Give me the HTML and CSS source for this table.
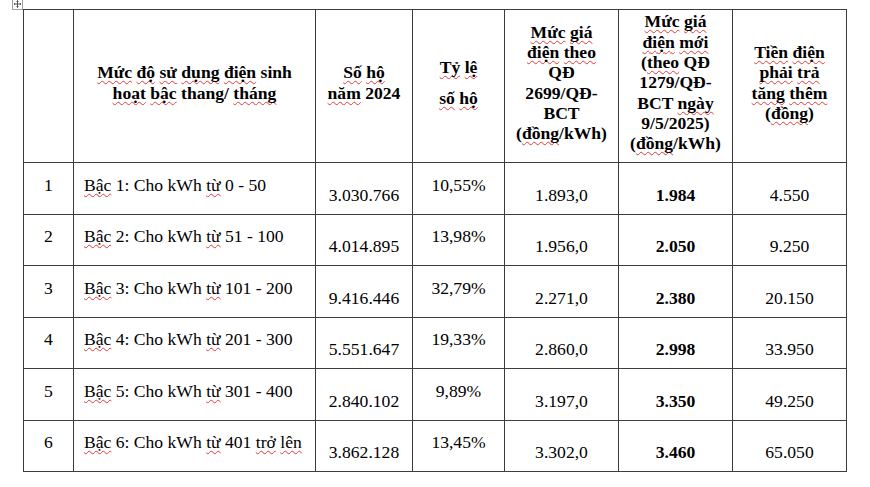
FILE: index.html
```html
<!DOCTYPE html>
<html lang="vi">
<head>
<meta charset="utf-8">
<link rel="stylesheet" href="styles.css">
</head>
<body>
<div class="page">
  <svg class="move-handle" width="11" height="10" viewBox="0 0 11 10">
    <rect x="0.5" y="-1.5" width="10" height="11" fill="#fff" stroke="#a0a0a0"/>
    <path d="M5.5 0.5v7M2 4h7M4.5 1.5l1-1 1 1M4.5 6.5l1 1 1-1M3 3l-1 1 1 1M8 3l1 1-1 1" stroke="#555" stroke-width="1" fill="none"/>
  </svg>
  <table class="tbl">
    <colgroup>
      <col class="c1"><col class="c2"><col class="c3"><col class="c4"><col class="c5"><col class="c6"><col class="c7">
    </colgroup>
    <thead>
      <tr class="head">
        <th></th>
        <th><span class="sp">Mức</span> <span class="sp">độ</span> <span class="sp">sử</span> <span class="sp">dụng</span> <span class="sp">điện</span> sinh<br><span class="sp">hoạt</span> <span class="sp">bậc</span> thang/ <span class="sp">tháng</span></th>
        <th><span class="sp">Số</span> <span class="sp">hộ</span><br><span class="sp">năm</span> 2024</th>
        <th class="wide-lines"><span class="sp">Tỷ</span> <span class="sp">lệ</span><br><span class="sp">số</span> <span class="sp">hộ</span></th>
        <th><span class="sp">Mức</span> <span class="sp">giá</span><br><span class="sp">điện</span> <span class="sp">theo</span><br>QĐ<br>2699/QĐ-<br>BCT<br>(<span class="sp">đồng</span>/kWh)</th>
        <th><span class="sp">Mức</span> <span class="sp">giá</span><br><span class="sp">điện</span> <span class="sp">mới</span><br>(<span class="sp">theo</span> QĐ<br>1279/QĐ-<br>BCT <span class="sp">ngày</span><br>9/5/2025)<br>(<span class="sp">đồng</span>/kWh)</th>
        <th><span class="sp">Tiền</span> <span class="sp">điện</span><br><span class="sp">phải</span> <span class="sp">trả</span><br><span class="sp">tăng</span> <span class="sp">thêm</span><br>(<span class="sp">đồng</span>)</th>
      </tr>
    </thead>
    <tbody>
      <tr>
        <td class="num">1</td><td class="label"><span class="sp">Bậc</span> 1: Cho kWh <span class="sp">từ</span> 0 - 50</td>
        <td class="low">3.030.766</td><td>10,55%</td><td class="low">1.893,0</td><td class="low strong">1.984</td><td class="low">4.550</td>
      </tr>
      <tr>
        <td class="num">2</td><td class="label"><span class="sp">Bậc</span> 2: Cho kWh <span class="sp">từ</span> 51 - 100</td>
        <td class="low">4.014.895</td><td>13,98%</td><td class="low">1.956,0</td><td class="low strong">2.050</td><td class="low">9.250</td>
      </tr>
      <tr>
        <td class="num">3</td><td class="label"><span class="sp">Bậc</span> 3: Cho kWh <span class="sp">từ</span> 101 - 200</td>
        <td class="low">9.416.446</td><td>32,79%</td><td class="low">2.271,0</td><td class="low strong">2.380</td><td class="low">20.150</td>
      </tr>
      <tr>
        <td class="num">4</td><td class="label"><span class="sp">Bậc</span> 4: Cho kWh <span class="sp">từ</span> 201 - 300</td>
        <td class="low">5.551.647</td><td>19,33%</td><td class="low">2.860,0</td><td class="low strong">2.998</td><td class="low">33.950</td>
      </tr>
      <tr>
        <td class="num">5</td><td class="label"><span class="sp">Bậc</span> 5: Cho kWh <span class="sp">từ</span> 301 - 400</td>
        <td class="low">2.840.102</td><td>9,89%</td><td class="low">3.197,0</td><td class="low strong">3.350</td><td class="low">49.250</td>
      </tr>
      <tr>
        <td class="num">6</td><td class="label"><span class="sp">Bậc</span> 6: Cho kWh <span class="sp">từ</span> 401 <span class="sp">trở</span> <span class="sp">lên</span></td>
        <td class="low">3.862.128</td><td>13,45%</td><td class="low">3.302,0</td><td class="low strong">3.460</td><td class="low">65.050</td>
      </tr>
    </tbody>
  </table>
  <div class="resize-handle"></div>
</div>
</body>
</html>
```
FILE: styles.css
```css
html, body {
  margin: 0;
  padding: 0;
  background: #ffffff;
}
.page {
  position: relative;
  padding: 9px 0 0 23px;
  font-family: "Liberation Serif", "Times New Roman", serif;
  font-size: 17.6px;
  line-height: 20.3px;
  color: #000;
}
.move-handle {
  position: absolute;
  left: 12px;
  top: 0;
}
.resize-handle {
  position: absolute;
  left: 847px;
  top: 472px;
  width: 3px;
  height: 3px;
  border: 1px solid #a0a0a0;
  background: #fff;
}
.tbl {
  border-collapse: collapse;
  table-layout: fixed;
  width: 823px;
}
.c1 { width: 50px; }
.c2 { width: 242px; }
.c3 { width: 97px; }
.c4 { width: 92px; }
.c5 { width: 114px; }
.c6 { width: 114px; }
.c7 { width: 114px; }
.tbl th, .tbl td {
  border: 1px solid #3c3c3c;
  padding: 0;
  text-align: center;
}
.head th {
  height: 153px;
  box-sizing: border-box;
  vertical-align: middle;
  padding-bottom: 7px;
  font-weight: bold;
}
.head th.wide-lines {
  line-height: 31px;
}
.tbl td {
  height: 51.5px;
  box-sizing: border-box;
  vertical-align: top;
  padding-top: 11.5px;
  white-space: nowrap;
}
.tbl td.label {
  text-align: left;
  padding-left: 10px;
}
.tbl td.low {
  padding-top: 21.5px;
}
.tbl td.strong {
  font-weight: bold;
}
.sp {
  text-decoration: underline wavy #e23a3a;
  text-decoration-thickness: 1px;
  text-underline-offset: 2px;
  text-decoration-skip-ink: none;
}
```
